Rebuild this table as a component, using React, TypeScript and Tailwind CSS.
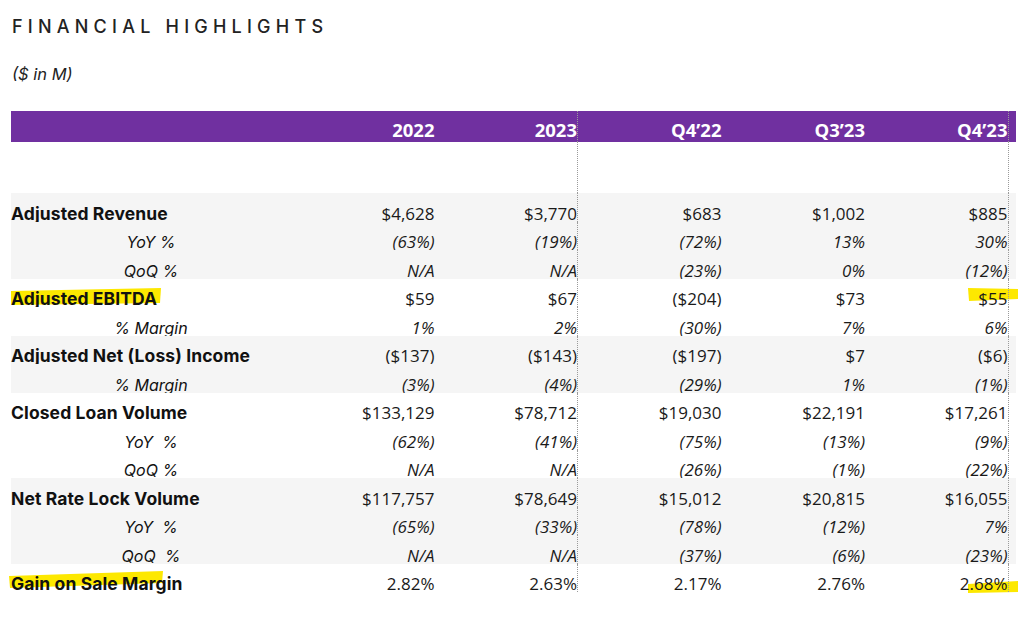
import React from 'react'

type Row = { label: string; bold?: boolean; gray?: boolean; vals: string[] }

const ROWS: Row[] = [
  { label: 'Adjusted Revenue', bold: true, gray: true, vals: ['$4,628', '$3,770', '$683', '$1,002', '$885'] },
  { label: 'YoY %', gray: true, vals: ['(63%)', '(19%)', '(72%)', '13%', '30%'] },
  { label: 'QoQ %', gray: true, vals: ['N/A', 'N/A', '(23%)', '0%', '(12%)'] },
  { label: 'Adjusted EBITDA', bold: true, vals: ['$59', '$67', '($204)', '$73', '$55'] },
  { label: '% Margin', vals: ['1%', '2%', '(30%)', '7%', '6%'] },
  { label: 'Adjusted Net (Loss) Income', bold: true, gray: true, vals: ['($137)', '($143)', '($197)', '$7', '($6)'] },
  { label: '% Margin', gray: true, vals: ['(3%)', '(4%)', '(29%)', '1%', '(1%)'] },
  { label: 'Closed Loan Volume', bold: true, vals: ['$133,129', '$78,712', '$19,030', '$22,191', '$17,261'] },
  { label: 'YoY  %', vals: ['(62%)', '(41%)', '(75%)', '(13%)', '(9%)'] },
  { label: 'QoQ %', vals: ['N/A', 'N/A', '(26%)', '(1%)', '(22%)'] },
  { label: 'Net Rate Lock Volume', bold: true, gray: true, vals: ['$117,757', '$78,649', '$15,012', '$20,815', '$16,055'] },
  { label: 'YoY  %', gray: true, vals: ['(65%)', '(33%)', '(78%)', '(12%)', '7%'] },
  { label: 'QoQ  %', gray: true, vals: ['N/A', 'N/A', '(37%)', '(6%)', '(23%)'] },
  { label: 'Gain on Sale Margin', bold: true, vals: ['2.82%', '2.63%', '2.17%', '2.76%', '2.68%'] },
]

const HEADERS = ['2022', '2023', 'Q4\u201922', 'Q3\u201923', 'Q4\u201923']

const GRID = 'grid grid-cols-[280px_repeat(5,143.5px)_1fr]'
const LABEL_FONT = "font-['Inter',sans-serif]"
const NUM_FONT = "font-['Open_Sans',sans-serif]"

// dotted rule after 2023 and Q4'23 columns
const cellBorder = (i: number) =>
  i === 1 || i === 4 ? 'border-r border-dotted border-[#9a9a9a]' : ''

function Marker({ className, points, w, h }: { className: string; points: string; w: number; h: number }) {
  return (
    <svg className={`absolute ${className}`} width={w} height={h} viewBox={`0 0 ${w} ${h}`}>
      <polygon points={points} fill="#fde800" />
    </svg>
  )
}

function DataRow({ row, idx }: { row: Row; idx: number }) {
  return (
    <div className={`${GRID} relative h-[28.5px] ${row.gray ? 'bg-[#f5f5f5]' : 'bg-white'}`}>
      {idx === 3 && (
        <>
          <Marker className="left-0 top-[9px]" w={150} h={18} points="0,3 150,0 149,15 0,17" />
          <Marker className="left-[957px] top-[9px]" w={50} h={14} points="0,0 50,1 50,11 1,13" />
        </>
      )}
      {idx === 13 && (
        <>
          <Marker className="left-[-2px] top-[7px]" w={154} h={18} points="0,5 154,0 153,12 1,17" />
          <Marker className="left-[957px] top-[17px]" w={50} h={12} points="0,3 50,0 50,11 0,12" />
        </>
      )}
      <div
        className={`relative flex items-end ${LABEL_FONT} leading-[16px] text-[#111] whitespace-pre ${
          row.bold ? 'font-bold text-[17.5px] tracking-[0.1px]' : 'italic text-[16px] justify-center'
        }`}
      >
        {row.label}
      </div>
      {row.vals.map((v, i) => (
        <div
          key={i}
          className={`relative flex items-end justify-end ${NUM_FONT} text-[17px] leading-[16px] text-[#1a1a1a] ${
            row.bold ? '' : 'italic'
          } ${cellBorder(i)}`}
        >
          {v}
        </div>
      ))}
      <div />
    </div>
  )
}

export default function App() {
  return (
    <div className="w-[1024px] h-[623px] bg-white overflow-hidden">
      <div className="pl-[12px] pt-[16px]">
        <div className={`${LABEL_FONT} text-[18px] leading-[22px] font-medium tracking-[0.29em] text-[#222]`}>
          FINANCIAL HIGHLIGHTS
        </div>
        <div className={`${LABEL_FONT} mt-[26px] text-[16.5px] leading-[20px] italic text-[#222]`}>($ in M)</div>
      </div>

      <div className="ml-[11px] mt-[27px] w-[1005px]">
        <div className={`${GRID} h-[31px] bg-[#7030a0]`}>
          <div />
          {HEADERS.map((h, i) => (
            <div
              key={h}
              className={`flex items-end justify-end pb-[4px] ${NUM_FONT} text-[18.5px] font-bold leading-[16px] text-white ${cellBorder(i)}`}
            >
              {h}
            </div>
          ))}
          <div />
        </div>

        <div className={`${GRID} h-[51px]`}>
          <div />
          {HEADERS.map((h, i) => (
            <div key={h} className={cellBorder(i)} />
          ))}
          <div />
        </div>

        {ROWS.map((row, i) => (
          <DataRow key={i} row={row} idx={i} />
        ))}
      </div>
    </div>
  )
}
